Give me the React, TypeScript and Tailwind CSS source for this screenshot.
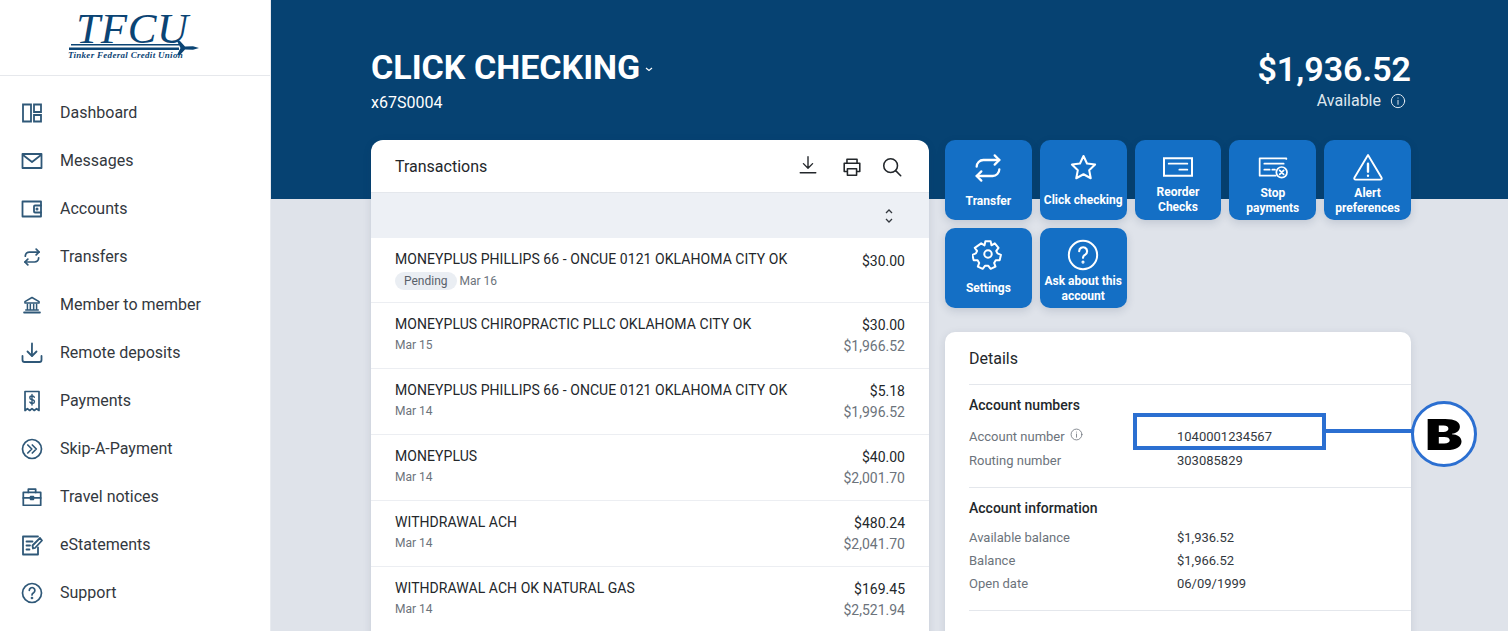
import type { ReactNode } from 'react';

const Svg = ({ size = 24, sw = 1.6, className, children }: { size?: number; sw?: number; className?: string; children: ReactNode }) => (
  <svg width={size} height={size} viewBox="0 0 24 24" fill="none" stroke="currentColor" strokeWidth={sw} strokeLinecap="round" strokeLinejoin="round" className={className}>
    {children}
  </svg>
);

const navItems: { label: string; icon: ReactNode }[] = [
  { label: 'Dashboard', icon: <Svg sw={1.8}><path d="M3 3.5h8v17H3zM14 3.5h7v7.5h-7zM14 14h7v6.5h-7z" strokeLinejoin="miter" /></Svg> },
  { label: 'Messages', icon: <Svg sw={1.8}><path d="M2.5 5h19v14h-19z" /><path d="M3 6l9 7 9-7" /></Svg> },
  { label: 'Accounts', icon: <Svg sw={1.8}><path d="M2.5 4.5h18.5v15H2.5z" /><path d="M21 8.5h-6a1 1 0 0 0-1 1v5a1 1 0 0 0 1 1h6" /><circle cx="17" cy="12" r=".6" /></Svg> },
  { label: 'Transfers', icon: <Svg size={20} sw={2.1}><path d="M17 2.5l3.5 3.5L17 9.5" /><path d="M20.5 6H9a5 5 0 0 0-5 5" /><path d="M7 21.5L3.5 18 7 14.5" /><path d="M3.5 18H15a5 5 0 0 0 5-5" /></Svg> },
  { label: 'Member to member', icon: <Svg size={20} sw={1.8}><path d="M12 3L3.5 8v1.5h17V8z" /><path d="M6.5 11v6M10 11v6M14 11v6M17.5 11v6M4.5 18h15" /><path d="M2.5 21h19" strokeWidth={2.2} /></Svg> },
  { label: 'Remote deposits', icon: <Svg sw={1.8}><path d="M12 2.5c0 3-.2 7 0 12" /><path d="M7.5 10.5l4.5 4.5 4.5-4.5" /><path d="M2.5 15v4a2 2 0 0 0 2 2h15a2 2 0 0 0 2-2v-4" /></Svg> },
  { label: 'Payments', icon: <Svg sw={1.7}><path d="M5 2.5h14v19l-2.4-1.8-2.3 1.8-2.3-1.8-2.3 1.8-2.3-1.8L5 21.5z" /><path d="M14.3 8.3a2 2 0 0 0-2-1.3h-.6c-2.5 0-2.5 3.2 0 3.6l1 .2c2.4.4 2.4 3.7-.3 3.7-1.3 0-2.1-.5-2.5-1.4M12 5.5V16" strokeWidth={1.4} /></Svg> },
  { label: 'Skip-A-Payment', icon: <Svg sw={1.7}><circle cx="12" cy="12" r="9.5" /><path d="M7.8 8l4 4-4 4M12.3 8l4 4-4 4" /></Svg> },
  { label: 'Travel notices', icon: <Svg size={22} sw={1.9}><path d="M2.5 7h19v14h-19z" /><path d="M8 7V3.5h8V7M2.5 13h19" /><path d="M10.5 11.5h3v3h-3z" fill="currentColor" /></Svg> },
  { label: 'eStatements', icon: <Svg sw={1.8}><path d="M18 3.5H3v18h15v-7" /><path d="M6.5 8.5h6M6.5 12.5H10M6.5 16.5h3" /><path d="M13 15.5l-.5-3L20 5l2 2.5-7 7.5z" /></Svg> },
  { label: 'Support', icon: <Svg sw={1.7}><circle cx="12" cy="12" r="9.5" /><path d="M9.3 9.3a2.8 2.8 0 1 1 4.3 2.4c-1 .6-1.6 1.2-1.6 2.3" /><circle cx="12" cy="17" r=".5" /></Svg> },
];

const actions: { label: string[]; icon: ReactNode; pad: string }[] = [
  { label: ['Transfer'], pad: 'pt-[12px] gap-[10px]', icon: <Svg size={32} sw={1.7}><path d="M17 2.5l3.5 3.5L17 9.5" /><path d="M20.5 6H8.5a5 5 0 0 0-5 5" /><path d="M7 21.5L3.5 18 7 14.5" /><path d="M3.5 18h12a5 5 0 0 0 5-5" /></Svg> },
  { label: ['Click checking'], pad: 'pt-[13px] gap-[11px]', icon: <Svg size={29} sw={1.7}><path d="M12 2.5l2.9 6.2 6.7.9-4.9 4.6 1.3 6.7L12 17.6l-6 3.3 1.3-6.7-4.9-4.6 6.7-.9z" /></Svg> },
  { label: ['Reorder', 'Checks'], pad: 'pt-[11px] gap-[2px]', icon: <Svg size={32} sw={1.3}><path d="M1.5 5.5h21v13h-21z" strokeLinejoin="miter" strokeWidth={1.5} /><path d="M5 9.5h14M13 14h6" /></Svg> },
  { label: ['Stop', 'payments'], pad: 'pt-[11px] gap-[3px]', icon: <Svg size={32} sw={1.3}><path d="M22 6v-.5H2v13h12" /><path d="M5.5 9.5H20M5.5 14h4M11.5 14h2" /><circle cx="18.5" cy="16" r="4" /><path d="M17 14.5l3 3M20 14.5l-3 3" /></Svg> },
  { label: ['Alert', 'preferences'], pad: 'pt-[11px] gap-[3px]', icon: <Svg size={32} sw={1.4}><path d="M12 3L1.8 20a1 1 0 0 0 .9 1.5h18.6a1 1 0 0 0 .9-1.500z" /><path d="M12 9.5v6M12 18.5v.1" strokeWidth={1.8} /></Svg> },
  { label: ['Settings'], pad: 'pt-[10px] gap-[11px]', icon: <Svg size={32} sw={1.5}><circle cx="12" cy="12" r="2.8" /><path d="M10 2.500h4l.6 3 2.500-1.500 2.800 3.400-1.700 2.300.9 1.800 2.600 1.100-.9 4-3 .1-1.200 2 1 2.700-3.600 1.700-1.900-2.300h-2.200l-1.900 2.300-3.600-1.700 1-2.700-1.200-2-3-.1-.9-4 2.600-1.100.9-1.800-1.700-2.300L6.900 4l2.500 1.500z" /></Svg> },
  { label: ['Ask about this', 'account'], pad: 'pt-[10px] gap-[2px]', icon: <Svg size={34} sw={1.4}><circle cx="12" cy="12" r="10" /><path d="M9.3 9.3a2.8 2.8 0 1 1 4.3 2.4c-1 .6-1.6 1.2-1.6 2.3" strokeWidth={1.5} /><circle cx="12" cy="17" r=".4" /></Svg> },
];

const transactions = [
  { name: 'MONEYPLUS PHILLIPS 66 - ONCUE 0121 OKLAHOMA CITY OK', amount: '$30.00', date: 'Mar 16', pending: true },
  { name: 'MONEYPLUS CHIROPRACTIC PLLC OKLAHOMA CITY OK', amount: '$30.00', date: 'Mar 15', balance: '$1,966.52' },
  { name: 'MONEYPLUS PHILLIPS 66 - ONCUE 0121 OKLAHOMA CITY OK', amount: '$5.18', date: 'Mar 14', balance: '$1,996.52' },
  { name: 'MONEYPLUS', amount: '$40.00', date: 'Mar 14', balance: '$2,001.70' },
  { name: 'WITHDRAWAL ACH', amount: '$480.24', date: 'Mar 14', balance: '$2,041.70' },
  { name: 'WITHDRAWAL ACH OK NATURAL GAS', amount: '$169.45', date: 'Mar 14', balance: '$2,521.94' },
];

function Logo() {
  return (
    <div className="flex h-[76px] shrink-0 flex-col items-center border-b border-[#e6e8ec] pt-[9px] text-[#0b4474] font-['Liberation_Serif',serif] italic">
      <div className="mr-[5px] h-[32px] text-[43px] leading-[39px] tracking-[0.6px]">TFCU</div>
      <svg width="130" height="14" viewBox="0 0 130 14" className="-ml-[2px] shrink-0">
        <path d="M2 3h108v1.500H2zM0 6.500h110V9H0z" fill="currentColor" />
        <path d="M108 0h3l5 5.500 8-.3 6 1.800-6 1.800-8-.3-5 5.500h-3l3.500-7z" fill="currentColor" />
      </svg>
      <div className="-ml-[19px] -mt-[5px] text-[9px] leading-[11px] font-bold tracking-[0.3px]">Tinker Federal Credit Union</div>
    </div>
  );
}

function Sidebar() {
  return (
    <aside className="flex h-full w-[271px] shrink-0 flex-col border-r border-[#e8ebf0] bg-white">
      <Logo />
      <nav className="flex flex-col pt-[13px]">
        {navItems.map((item) => (
          <div key={item.label} className="flex h-[48px] items-center pl-[20px] text-[16px] text-[#33383e]">
            <span className="flex w-[24px] shrink-0 justify-center text-[#2f5878]">{item.icon}</span>
            <span className="ml-[16px]">{item.label}</span>
          </div>
        ))}
      </nav>
    </aside>
  );
}

function TransactionRow({ name, amount, date, balance, pending }: { name: string; amount: string; date: string; balance?: string; pending?: boolean }) {
  return (
    <div className={`flex shrink-0 justify-between border-b border-[#eceef2] pl-[24px] pr-[24px] pt-[11px] ${pending ? 'h-[65px]' : 'h-[66px]'}`}>
      <div>
        <div className="text-[14px] leading-[20px] tracking-[0.06px] text-[#23272b]">{name}</div>
        <div className={`flex items-center text-[12px] leading-[18px] text-[#6c737b] ${pending ? 'mt-[3px]' : 'mt-[2px]'}`}>
          {pending && <span className="mr-[3px] rounded-full bg-[#eaeef3] px-[9px] text-[#59616a]">Pending</span>}
          {date}
        </div>
      </div>
      <div className={`text-right ${pending ? 'pt-[2px]' : 'pt-[1px]'}`}>
        <div className="text-[14px] leading-[20px] text-[#23272b]">{amount}</div>
        {balance && <div className="mt-[1px] text-[14px] leading-[20px] text-[#6c737b]">{balance}</div>}
      </div>
    </div>
  );
}

function DetailRow({ label, value, info }: { label: string; value: string; info?: boolean }) {
  return (
    <div className="flex h-[23px] items-center text-[13px]">
      <span className="flex w-[208px] items-center text-[#6c737b]">
        {label}
        {info && <Svg size={13} sw={1.5} className="-mt-[4px] ml-[5px]"><circle cx="12" cy="12" r="10" /><path d="M12 11v6M12 7.5v.1" /></Svg>}
      </span>
      <span className="text-[#33383e]">{value}</span>
    </div>
  );
}

export default function App() {
  return (
    <div className="relative flex h-[631px] w-[1508px] overflow-hidden bg-[#dfe3ea] font-['Roboto',sans-serif]">
      <Sidebar />
      <main className="flex min-w-0 flex-1 flex-col">
        <header className="flex h-[199px] shrink-0 justify-between bg-[#064272] pl-[100px] pr-[97px] pt-[45px] text-white">
          <div>
            <div className="flex items-center">
              <h1 className="text-[34px] leading-[44px] font-bold">CLICK CHECKING</h1>
              <svg width="10" height="10" viewBox="0 0 10 10" fill="none" stroke="currentColor" strokeWidth="1.2" className="ml-[4px] mt-[4px]"><path d="M2 4l3 2.500L8 4" /></svg>
            </div>
            <div className="mt-[2px] text-[16px] leading-[24px]">x67S0004</div>
          </div>
          <div className="flex flex-col items-end pt-[2px]">
            <div className="text-[34px] leading-[44px] font-semibold">$1,936.52</div>
            <div className="-mt-[2px] flex items-center text-[16px] leading-[24px] text-[#dfe7ee]">
              Available
              <Svg size={16} sw={1.5} className="ml-[9px] mr-[5px]"><circle cx="12" cy="12" r="10" /><path d="M12 11v6M12 7.5v.1" /></Svg>
            </div>
          </div>
        </header>

        <div className="-mt-[59px] flex gap-[16px] pl-[100px] pr-[97px]">
          <section className="flex w-[558px] shrink-0 flex-col rounded-t-[12px] bg-white shadow-[0_2px_8px_rgba(30,50,80,0.12)]">
            <div className="flex h-[53px] shrink-0 items-center justify-between border-b border-[#e4e7ec] pl-[24px] pr-[26px]">
              <h2 className="mt-[2px] text-[16px] text-[#23272b]">Transactions</h2>
              <div className="flex items-center text-[#23272b]">
                <Svg size={22} sw={1.5} className="-mt-[3px] ml-[1px]"><path d="M12 3v12M7 10.500l5 5 5-5M3.500 20.500h17" /></Svg>
                <Svg size={22} sw={1.7} className="ml-[22px] mt-[2px]"><path d="M6.500 17H3.500V8h17v9h-3" /><path d="M6.500 8V3.500h11V8" /><path d="M7 14h10v7H7z" /></Svg>
                <Svg size={22} sw={1.7} className="ml-[18px] mt-[2px]"><circle cx="10.500" cy="10.500" r="7.500" /><path d="M16 16l5.500 5.500" /></Svg>
              </div>
            </div>
            <div className="flex h-[45px] shrink-0 items-center justify-end bg-[#edf0f5] pr-[33px] text-[#33383e]">
              <svg width="14" height="16" viewBox="0 0 14 16" fill="none" stroke="currentColor" strokeWidth="1.3"><path d="M4 5l3-3 3 3M4 11l3 3 3-3" /></svg>
            </div>
            {transactions.map((t, i) => (
              <TransactionRow key={i} {...t} />
            ))}
          </section>

          <div className="flex w-[466px] shrink-0 flex-col">
            <div className="grid grid-cols-5 gap-[8px]">
              {actions.map((a) => (
                <button key={a.label[0]} type="button" className={`flex h-[80px] flex-col items-center rounded-[10px] bg-[#146fc5] text-center text-[12px] leading-[15px] font-bold text-white shadow-[0_3px_8px_rgba(30,50,80,0.15)] ${a.pad}`}>
                  {a.icon}
                  <span className="whitespace-nowrap">
                    {a.label.map((l) => (
                      <span key={l} className="block">{l}</span>
                    ))}
                  </span>
                </button>
              ))}
            </div>
            <section className="mt-[24px] rounded-t-[10px] bg-white pl-[24px] shadow-[0_2px_8px_rgba(30,50,80,0.12)]">
              <h2 className="flex h-[53px] items-center border-b border-[#e4e7ec] pt-[2px] text-[16px] text-[#23272b]">Details</h2>
              <div className="h-[103px] border-b border-[#e4e7ec] pt-[10px]">
                <h3 className="mb-[10px] text-[14px] leading-[20px] font-medium text-[#23272b]">Account numbers</h3>
                <DetailRow label="Account number" value="1040001234567" info />
                <div className="h-[1px]" />
                <DetailRow label="Routing number" value="303085829" />
              </div>
              <div className="h-[123px] border-b border-[#e4e7ec] pt-[10px]">
                <h3 className="mb-[8px] text-[14px] leading-[20px] font-medium text-[#23272b]">Account information</h3>
                <DetailRow label="Available balance" value="$1,936.52" />
                <DetailRow label="Balance" value="$1,966.52" />
                <DetailRow label="Open date" value="06/09/1999" />
              </div>
              <div className="h-[60px]" />
            </section>
          </div>
        </div>
      </main>

      {/* callout drawn over the details card */}
      <div className="absolute left-[1133px] top-[413px] h-[37px] w-[193px] border-[4px] border-[#2b6fd1]" />
      <div className="absolute left-[1325px] top-[429px] h-[4px] w-[88px] bg-[#2b6fd1]" />
      <div className="absolute left-[1411px] top-[401px] flex h-[66px] w-[66px] items-center justify-center rounded-full border-[3px] border-[#2b6fd1] bg-white font-['Inter',sans-serif] text-[42px] font-black text-black">
        <span className="scale-x-[1.35]">B</span>
      </div>
    </div>
  );
}
